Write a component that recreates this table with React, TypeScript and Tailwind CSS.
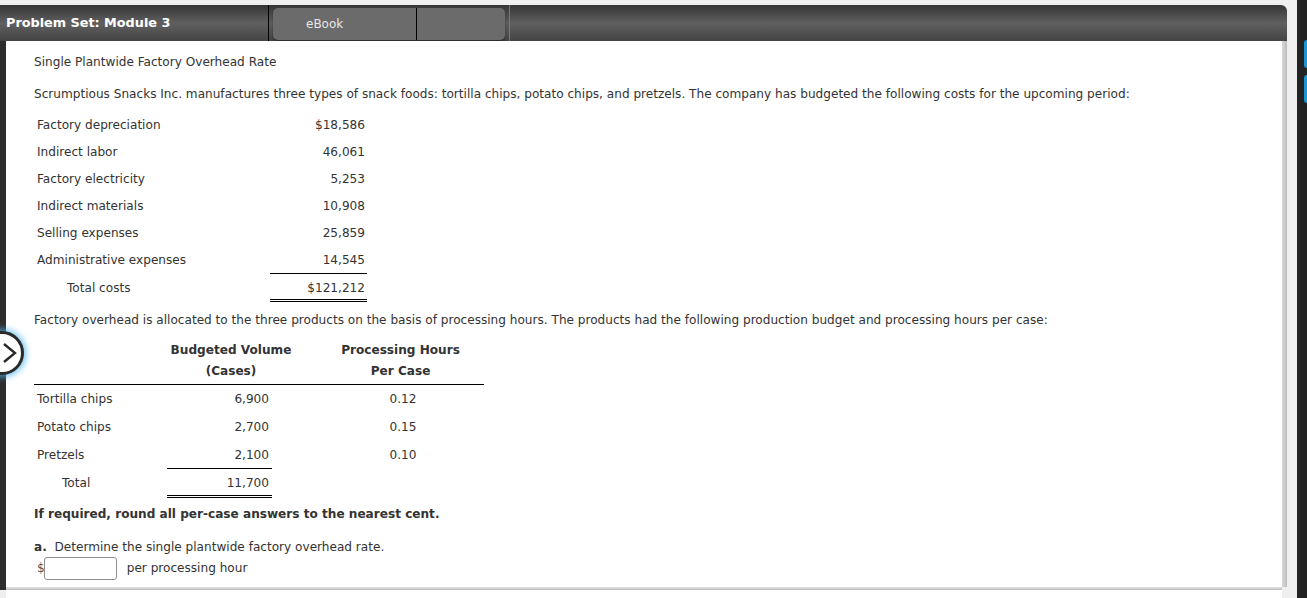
import { Fragment } from 'react';

const costs = [
  { label: 'Factory depreciation', value: '$18,586' },
  { label: 'Indirect labor', value: '46,061' },
  { label: 'Factory electricity', value: '5,253' },
  { label: 'Indirect materials', value: '10,908' },
  { label: 'Selling expenses', value: '25,859' },
  { label: 'Administrative expenses', value: '14,545', underline: true },
];

const products = [
  { name: 'Tortilla chips', volume: '6,900', hours: '0.12', tall: false },
  { name: 'Potato chips', volume: '2,700', hours: '0.15', tall: true },
  { name: 'Pretzels', volume: '2,100', hours: '0.10', tall: true, underline: true },
];

const App = () => {
  return (
    <div
      className="relative w-[1307px] h-[598px] overflow-hidden bg-[#efefef] text-[12.1px] text-[#333]"
      style={{ fontFamily: '"DejaVu Sans", Verdana, sans-serif' }}
    >
      <div className="flex h-full">
        {/* main column */}
        <div className="flex flex-col w-[1287px] pt-[5px]">
          {/* header */}
          <div className="shrink-0 flex items-stretch h-[36px] rounded-tr-[6px] bg-gradient-to-b from-[#353535] via-[#606060] to-[#444]">
            <div className="flex items-center w-[269px] pl-[6px] text-white font-bold text-[12.8px] border-r border-black">
              Problem Set: Module 3
            </div>
            <div className="flex items-stretch ml-[4px] mt-[3px] mb-[1px] w-[232px] rounded-[5px] bg-[#6b6b6b] shadow-[0_2px_3px_rgba(0,0,0,0.35)]">
              <div className="flex items-center w-[144px] pl-[33px] text-[12px] text-[#e8e8e8] border-r border-black">
                eBook
              </div>
            </div>
            <div className="ml-[4px] w-px bg-[#777]" />
          </div>

          {/* body */}
          <div className="flex flex-1 min-h-0">
            <div className="w-[6px] bg-[#2d2d2d] mb-[8px]" />
            <div className="flex-1 flex flex-col">
              <div className="flex flex-1 min-h-0">
                <div className="flex-1 bg-white pl-[28px] pt-[13px]">
                  <p className="h-[17px] leading-[17px]">Single Plantwide Factory Overhead Rate</p>
                  <p className="mt-[15px] h-[17px] leading-[17px]">
                    Scrumptious Snacks Inc. manufactures three types of snack foods: tortilla chips, potato chips, and pretzels. The company has budgeted the following costs for the upcoming period:
                  </p>

                  <div className="mt-[9px] grid grid-cols-[236px_97px] w-[333px]">
                    {costs.map((c) => (
                      <Fragment key={c.label}>
                        <div className="h-[27px] leading-[27px] pl-[3px]">{c.label}</div>
                        <div className={`h-[27px] leading-[27px] text-right pr-[2px] ${c.underline ? 'border-b border-black' : ''}`}>
                          {c.value}
                        </div>
                      </Fragment>
                    ))}
                    <div className="h-[28px] leading-[28px] pl-[33px]">Total costs</div>
                    <div className="h-[28px] leading-[28px] text-right pr-[2px] border-b-[3px] border-double border-black">
                      $121,212
                    </div>
                  </div>

                  <p className="mt-[10px] h-[17px] leading-[17px]">
                    Factory overhead is allocated to the three products on the basis of processing hours. The products had the following production budget and processing hours per case:
                  </p>

                  <div className="mt-[11px] w-[450px]">
                    <div className="grid grid-cols-[133px_128px_1fr] font-bold border-b border-black pb-[2px] whitespace-nowrap">
                      <div />
                      <div className="text-center leading-[21px]">
                        Budgeted Volume
                        <br />
                        (Cases)
                      </div>
                      <div className="text-center pl-[22px] leading-[21px]">
                        Processing Hours
                        <br />
                        Per Case
                      </div>
                    </div>
                    <div className="grid grid-cols-[133px_105px_1fr] pt-px">
                      {products.map((p) => (
                        <Fragment key={p.name}>
                          <div className={`${p.tall ? 'h-[28px] leading-[28px]' : 'h-[27px] leading-[27px]'} pl-[3px]`}>{p.name}</div>
                          <div
                            className={`${p.tall ? 'h-[28px] leading-[28px]' : 'h-[27px] leading-[27px]'} text-right pr-[3px] ${p.underline ? 'border-b border-black' : ''}`}
                          >
                            {p.volume}
                          </div>
                          <div className={`${p.tall ? 'h-[28px] leading-[28px]' : 'h-[27px] leading-[27px]'} text-center pl-[50px]`}>{p.hours}</div>
                        </Fragment>
                      ))}
                      <div className="h-[29px] leading-[29px] pl-[28px]">Total</div>
                      <div className="h-[29px] leading-[29px] text-right pr-[3px] border-b-[3px] border-double border-black">
                        11,700
                      </div>
                      <div />
                    </div>
                  </div>

                  <p className="mt-[8px] font-bold leading-[17px]">If required, round all per-case answers to the nearest cent.</p>
                  <p className="mt-[16px] leading-[17px]">
                    <span className="font-bold">a.</span>&nbsp; Determine the single plantwide factory overhead rate.
                  </p>
                  <div className="mt-[1px] flex items-center">
                    <span className="ml-[3px] text-[#555]">$</span>
                    <div className="ml-[-1px] w-[73px] h-[23px] rounded-[3px] border border-[#8e8e8e] bg-white" />
                    <span className="ml-[10px]">per processing hour</span>
                  </div>
                </div>
                <div className="w-[5px] bg-gradient-to-r from-[#d8d8d8] to-[#bdbdbd]" />
              </div>
              <div className="shrink-0 h-[3px] bg-gradient-to-b from-[#e4e4e4] to-[#bcbcbc] mr-[5px]" />
              <div className="shrink-0 h-[8px] bg-white mr-[5px]" />
            </div>
          </div>
        </div>

        {/* right edge */}
        <div className="w-[10px]" />
        <div className="flex-1 bg-[#222] pt-[40px] flex flex-col items-end gap-[7px]">
          <div className="w-[3px] h-[28px] rounded-l-full bg-[#1a96d6]" />
          <div className="w-[3px] h-[28px] rounded-l-full bg-[#1a96d6]" />
        </div>
      </div>

      {/* side toggle button */}
      <div className="absolute left-[-20px] top-[331px] w-[44px] h-[44px] rounded-full bg-white border-[3px] border-[#2a2a2a] shadow-[0_0_6px_2px_rgba(80,180,240,0.8)] flex items-center justify-end pr-[3px]">
        <svg width="16" height="22" viewBox="0 0 16 22" fill="none" stroke="#2a2a2a" strokeWidth="2.4">
          <path d="M2 2 L13 11 L2 20" />
        </svg>
      </div>
    </div>
  );
};

export default App;
